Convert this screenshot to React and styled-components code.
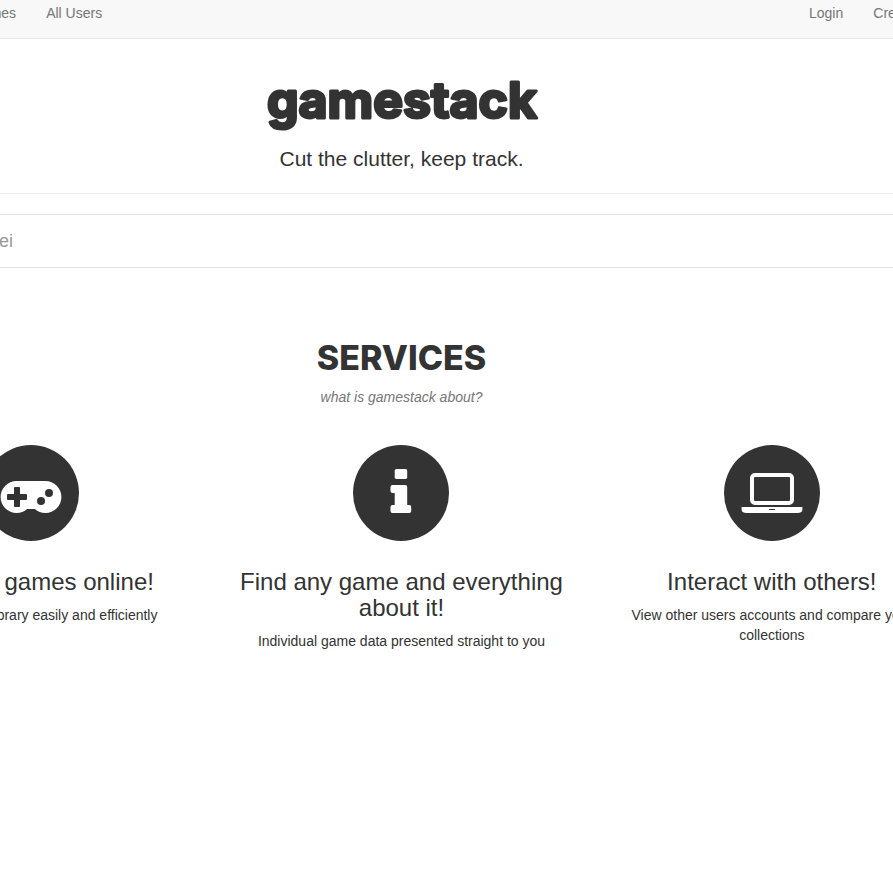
import React from "react";
import styled, { createGlobalStyle } from "styled-components";

const GlobalStyle = createGlobalStyle`
  *, *::before, *::after { box-sizing: border-box; }
  body {
    margin: 0;
    background: #fff;
    color: #333;
    font: 14px/20px "Liberation Sans", Arial, sans-serif;
  }
  h1, h2, h3, p, ul { margin: 0; padding: 0; }
`;

const Viewport = styled.div`
  overflow: hidden;
  min-height: 100vh;
`;

const NavBar = styled.header`
  background: #f8f8f8;
  border-bottom: 1px solid #e7e7e7;
`;

/* The content is wider than the window and bleeds past both of its edges. */
const Bleed = styled.div`
  margin: 0 -79px 0 -169px;
`;

const NavRow = styled(Bleed).attrs({ as: "nav" })`
  display: flex;
  justify-content: space-between;
  padding: 3px 3px 15px 140px;
`;

const NavList = styled.ul`
  display: flex;
  list-style: none;
  gap: 30px;
`;

const NavLink = styled.a`
  color: #777;
  text-decoration: none;
  white-space: nowrap;
`;

const Hero = styled.section`
  display: flex;
  flex-direction: column;
  align-items: center;
  padding: 30px 0 19px;
  border-bottom: 1px solid #eee;
`;

const Logo = styled.h1`
  height: 70px;
`;

const Wordmark = styled.svg`
  display: block;
  width: 320px;
  height: 70px;
  overflow: visible;
  text {
    font: 700 50px Inter, sans-serif;
    fill: #333;
    stroke: #333;
    stroke-width: 3px;
    stroke-linejoin: round;
    text-anchor: middle;
  }
`;

const Tagline = styled.p`
  font-size: 21px;
  line-height: 30px;
  margin-top: 5px;
`;

const SearchInput = styled.input`
  display: block;
  width: 100%;
  height: 54px;
  margin-top: 20px;
  padding: 0 24px;
  border: 1px solid #e1e1e1;
  background: #fff;
  color: #333;
  font: 18px/24px "Liberation Sans", Arial, sans-serif;
  &::placeholder { color: #999; opacity: 1; }
`;

const Services = styled.section`
  padding: 70px 15px 0;
  text-align: center;
`;

const SectionTitle = styled.h2`
  font: 800 34px/40px Inter, sans-serif;
`;

const SectionNote = styled.p`
  margin-top: 9px;
  color: #777;
  font-style: italic;
`;

const ServiceGrid = styled.div`
  display: grid;
  grid-template-columns: repeat(3, 1fr);
  margin-top: 38px;
`;

const ServiceCard = styled.article`
  padding: 0 15px;
`;

const IconBadge = styled.svg`
  display: block;
  width: 96px;
  height: 96px;
  margin: 0 auto;
`;

const ServiceTitle = styled.h3`
  margin-top: 28px;
  font-size: 24px;
  line-height: 26px;
  font-weight: 400;
`;

const ServiceText = styled.p`
  margin-top: 10px;
`;

const dark = "#333";

function Badge({ children }) {
  return (
    <IconBadge viewBox="0 0 96 96" aria-hidden="true">
      <circle cx="48" cy="48" r="48" fill={dark} />
      {children}
    </IconBadge>
  );
}

function GamepadIcon() {
  return (
    <Badge>
      <path
        fill="#fff"
        d="M33.6 36H62.4a16 16 0 0 1 0 32c-4 0-7.7-1.5-10.5-4h-7.8c-2.8 2.5-6.5 4-10.5 4a16 16 0 0 1 0-32z"
      />
      <rect x="24" y="49" width="20" height="6" rx="1" fill={dark} />
      <rect x="31" y="42" width="6" height="20" rx="1" fill={dark} />
      <circle cx="66" cy="48" r="4" fill={dark} />
      <circle cx="58" cy="56" r="4" fill={dark} />
    </Badge>
  );
}

function InfoIcon() {
  return (
    <Badge>
      <rect x="41.7" y="24" width="12.5" height="10" rx="1.8" fill="#fff" />
      <path
        fill="#fff"
        d="M39.5 40H52.2a2 2 0 0 1 2 2V60h2a2 2 0 0 1 2 2v4a2 2 0 0 1-2 2H39.5a2 2 0 0 1-2-2v-4a2 2 0 0 1 2-2h2.2V48h-2.2a2 2 0 0 1-2-2v-4a2 2 0 0 1 2-2z"
      />
    </Badge>
  );
}

function LaptopIcon() {
  return (
    <Badge>
      <rect x="28" y="30" width="40" height="28" rx="3" fill="none" stroke="#fff" strokeWidth="4" />
      <path fill="#fff" d="M17.6 62H78.4v3c0 1.7-2.2 3-5 3H22.6c-2.8 0-5-1.3-5-3z" />
      <rect x="45" y="64" width="6" height="1" rx="0.5" fill={dark} />
    </Badge>
  );
}

const services = [
  {
    Icon: GamepadIcon,
    title: "Put your games online!",
    text: "Manage your library easily and efficiently",
  },
  {
    Icon: InfoIcon,
    title: "Find any game and everything about it!",
    text: "Individual game data presented straight to you",
  },
  {
    Icon: LaptopIcon,
    title: "Interact with others!",
    text: "View other users accounts and compare your collections",
  },
];

export default function App() {
  return (
    <Viewport>
      <GlobalStyle />
      <NavBar>
        <NavRow>
          <NavList>
            <li><NavLink href="#games">Games</NavLink></li>
            <li><NavLink href="#users">All Users</NavLink></li>
          </NavList>
          <NavList>
            <li><NavLink href="#login">Login</NavLink></li>
            <li><NavLink href="#create">Create Account</NavLink></li>
          </NavList>
        </NavRow>
      </NavBar>
      <Bleed as="main">
        <Hero>
          <Logo>
            <Wordmark viewBox="0 0 320 70">
              <text x="160" y="49">gamestack</text>
            </Wordmark>
          </Logo>
          <Tagline>Cut the clutter, keep track.</Tagline>
        </Hero>
        <form role="search">
          <SearchInput type="search" aria-label="Search games" placeholder="Search, e.g. Sensei" />
        </form>
        <Services>
          <SectionTitle>SERVICES</SectionTitle>
          <SectionNote>what is gamestack about?</SectionNote>
          <ServiceGrid>
            {services.map(({ Icon, title, text }) => (
              <ServiceCard key={title}>
                <Icon />
                <ServiceTitle>{title}</ServiceTitle>
                <ServiceText>{text}</ServiceText>
              </ServiceCard>
            ))}
          </ServiceGrid>
        </Services>
      </Bleed>
    </Viewport>
  );
}
